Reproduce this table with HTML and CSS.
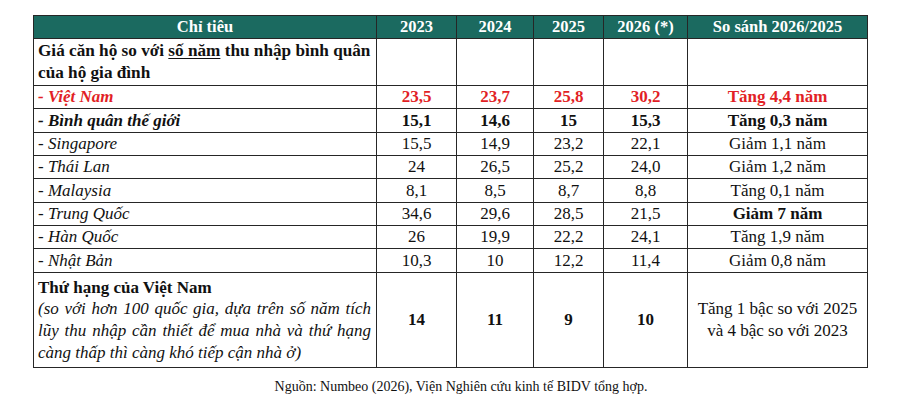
FILE: index.html
```html
<!DOCTYPE html>
<html lang="vi">
<head>
<meta charset="utf-8">
<title>Giá căn hộ so với thu nhập</title>
<link rel="stylesheet" href="styles.css">
</head>
<body>
<div class="page">
  <table class="data">
    <colgroup>
      <col class="c-label"><col class="c-y23"><col class="c-y24"><col class="c-y25"><col class="c-y26"><col class="c-cmp">
    </colgroup>
    <thead>
      <tr class="r-head">
        <th>Chỉ tiêu</th><th>2023</th><th>2024</th><th>2025</th><th>2026 (*)</th><th>So sánh 2026/2025</th>
      </tr>
    </thead>
    <tbody>
      <tr class="r-title">
        <td class="label b title">Giá căn hộ so với <u>số năm</u> thu nhập bình quân<br>của hộ gia đình</td>
        <td></td><td></td><td></td><td></td><td></td>
      </tr>
      <tr class="r-23 red b">
        <td class="label i">- Việt Nam</td><td>23,5</td><td>23,7</td><td>25,8</td><td>30,2</td><td>Tăng 4,4 năm</td>
      </tr>
      <tr class="r-24 b">
        <td class="label i">- Bình quân thế giới</td><td>15,1</td><td>14,6</td><td>15</td><td>15,3</td><td>Tăng 0,3 năm</td>
      </tr>
      <tr class="r-23">
        <td class="label i">- Singapore</td><td>15,5</td><td>14,9</td><td>23,2</td><td>22,1</td><td>Giảm 1,1 năm</td>
      </tr>
      <tr class="r-23">
        <td class="label i">- Thái Lan</td><td>24</td><td>26,5</td><td>25,2</td><td>24,0</td><td>Giảm 1,2 năm</td>
      </tr>
      <tr class="r-24">
        <td class="label i">- Malaysia</td><td>8,1</td><td>8,5</td><td>8,7</td><td>8,8</td><td>Tăng 0,1 năm</td>
      </tr>
      <tr class="r-23">
        <td class="label i">- Trung Quốc</td><td>34,6</td><td>29,6</td><td>28,5</td><td>21,5</td><td class="b">Giảm 7 năm</td>
      </tr>
      <tr class="r-23">
        <td class="label i">- Hàn Quốc</td><td>26</td><td>19,9</td><td>22,2</td><td>24,1</td><td>Tăng 1,9 năm</td>
      </tr>
      <tr class="r-24">
        <td class="label i">- Nhật Bản</td><td>10,3</td><td>10</td><td>12,2</td><td>11,4</td><td>Giảm 0,8 năm</td>
      </tr>
      <tr class="r-rank">
        <td class="label">
          <span class="b">Thứ hạng của Việt Nam</span>
          <span class="i jline">(so với hơn 100 quốc gia, dựa trên số năm tích</span>
          <span class="i jline">lũy thu nhập cần thiết để mua nhà và thứ hạng</span>
          <span class="i line">càng thấp thì càng khó tiếp cận nhà ở)</span>
        </td>
        <td class="b">14</td><td class="b">11</td><td class="b">9</td><td class="b">10</td>
        <td>Tăng 1 bậc so với 2025<br>và 4 bậc so với 2023</td>
      </tr>
    </tbody>
  </table>
  <p class="source">Nguồn: Numbeo (2026), Viện Nghiên cứu kinh tế BIDV tổng hợp.</p>
</div>
</body>
</html>
```

FILE: styles.css
```css
html, body {
  margin: 0;
  padding: 0;
  background: #ffffff;
}

body {
  font-family: "Liberation Serif", "Times New Roman", serif;
  color: #111111;
}

.page {
  width: 908px;
  padding-top: 15px;
}

.data {
  margin-left: 33px;
  width: 834px;
  border-collapse: collapse;
  table-layout: fixed;
  font-size: 17px;
  line-height: 21.6px;
}

.c-label { width: 343px; }
.c-y23 { width: 80px; }
.c-y24 { width: 77px; }
.c-y25 { width: 70px; }
.c-y26 { width: 84px; }
.c-cmp { width: 180px; }

.data th,
.data td {
  border: 1px solid #262626;
  padding: 0 4px;
  text-align: center;
  vertical-align: middle;
}

.data th {
  background: #1b6a60;
  color: #ffffff;
  font-weight: bold;
  font-size: 16.5px;
}

.data td.label {
  text-align: left;
  padding-left: 4px;
  padding-right: 5px;
}

.data td.title {
  font-size: 17.2px;
  white-space: nowrap;
  padding-right: 0;
}

.r-head { height: 23px; }
.r-title { height: 47px; }
.r-23 { height: 23px; }
.r-24 { height: 24px; }
.r-rank { height: 95px; }

.b { font-weight: bold; }
.i { font-style: italic; }
.red { color: #e21f26; }

.data u {
  text-decoration-thickness: 1px;
  text-underline-offset: 2px;
}

.line,
.jline,
.r-rank .label .b {
  display: block;
}

.jline {
  text-align: justify;
  text-align-last: justify;
}

.source {
  margin: 11px 0 0 0;
  padding-left: 44px;
  width: 834px;
  text-align: center;
  font-size: 14px;
  color: #111111;
}
```
